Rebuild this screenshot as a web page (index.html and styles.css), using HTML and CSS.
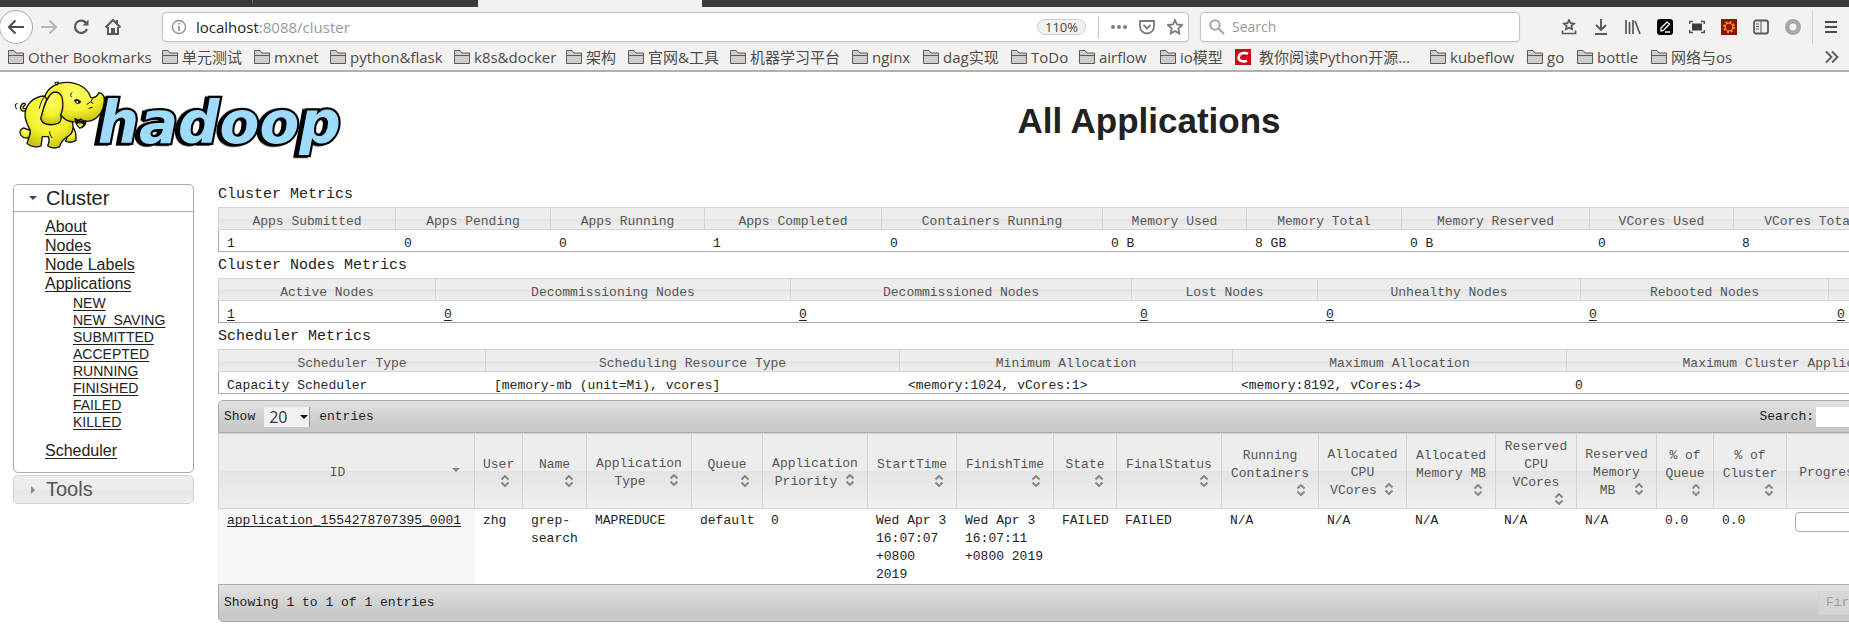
FILE: index.html
```
<!DOCTYPE html>
<html lang="en">
<head>
<meta charset="utf-8">
<title>All Applications</title>
<link rel="stylesheet" href="styles.css">
</head>
<body>
<svg class="defs" aria-hidden="true">
  <symbol id="folder" viewBox="0 0 16 16"><path d="M.5 14.500V1.500h5.500l2 2.500h7.500v10.500zM.5 6.500h15" fill="#d0cecc" stroke="#5c5b59"/></symbol>
  <symbol id="sort" viewBox="0 0 10 12"><path d="M1.500 4.500L5 1l3.500 3.500M1.500 7.500L5 11l3.500-3.500" fill="none" stroke="#888" stroke-width="2"/></symbol>
</svg>

<header class="browser">
  <div class="tabs"><span class="tab-behind"></span><span class="tab-active"></span></div>
  <div class="toolbar">
    <button class="back" aria-label="Back"><svg width="18" height="18" viewBox="0 0 18 18"><path d="M17 9H2M8.500 2.500L2 9l6.500 6.500" fill="none" stroke="#4c4b49" stroke-width="2"/></svg></button>
    <button class="tool" aria-label="Forward"><svg width="18" height="18" viewBox="0 0 18 18"><path d="M1 9h15M9.500 2.500L16 9l-6.500 6.500" fill="none" stroke="#bab8b5" stroke-width="2"/></svg></button>
    <button class="tool" aria-label="Reload"><svg width="18" height="18" viewBox="0 0 18 18"><path d="M14.500 5.500A6.200 6.200 0 1 0 15 11" fill="none" stroke="#5a5957" stroke-width="2.200"/><path d="M16.500 1.500v6h-6z" fill="#5a5957"/></svg></button>
    <button class="tool" aria-label="Home"><svg width="18" height="18" viewBox="0 0 18 18"><path d="M1.500 9.500L9 2l7.500 7.500" fill="none" stroke="#5a5957" stroke-width="2"/><path d="M4 9v7h10V9" fill="none" stroke="#5a5957" stroke-width="2"/><path d="M7 16v-6h4v6zM12 2h2v5h-2z" fill="#5a5957"/></svg></button>
    <div class="urlbar">
      <svg width="16" height="16" viewBox="0 0 16 16"><circle cx="8" cy="8" r="6.500" fill="none" stroke="#8a8a8a" stroke-width="1.300"/><path d="M8 7v5M8 4v1.600" stroke="#8a8a8a" stroke-width="1.600"/></svg>
      <span class="url">localhost<span class="dim">:8088/cluster</span></span>
      <button class="zoom-level">110%</button>
      <span class="bar-divider"></span>
      <svg width="16" height="16" viewBox="0 0 16 16"><g fill="#7c7c7c"><circle cx="2" cy="8" r="2"/><circle cx="8" cy="8" r="2"/><circle cx="14" cy="8" r="2"/></g></svg>
      <svg width="16" height="16" viewBox="0 0 16 16"><path d="M1 2h14v5.500a7 7 0 0 1-14 0z" fill="none" stroke="#7c7c7c" stroke-width="1.800"/><path d="M4.500 6L8 9.500 11.500 6" fill="none" stroke="#7c7c7c" stroke-width="1.800"/></svg>
      <svg width="16" height="16" viewBox="0 0 16 16"><path d="M8 1l2 4.500 5 .6-3.700 3.400 1 5L8 12l-4.300 2.500 1-5L1 6.100l5-.6z" fill="none" stroke="#7c7c7c" stroke-width="1.800"/></svg>
    </div>
    <label class="searchbar">
      <svg width="16" height="16" viewBox="0 0 16 16"><circle cx="6" cy="6" r="4.700" fill="none" stroke="#a5a5a5" stroke-width="2"/><path d="M9.500 9.500L15 15" stroke="#a5a5a5" stroke-width="2"/></svg>
      <input type="search" placeholder="Search" aria-label="Search the web">
    </label>
    <div class="extensions">
      <button aria-label="Saved pages"><svg width="16" height="16" viewBox="0 0 16 16"><path d="M8 1l1.500 3.200 3.500.4-2.600 2.300.7 3.400L8 8.700l-3.100 1.600.7-3.400L3 4.600l3.500-.4zM1.500 11.500v3h13v-3" fill="none" stroke="#5a5957" stroke-width="1.700"/></svg></button>
      <button aria-label="Downloads"><svg width="16" height="16" viewBox="0 0 16 16"><path d="M8 0v11M3 6l5 5 5-5M2 15h12" fill="none" stroke="#5a5957" stroke-width="1.900"/></svg></button>
      <button aria-label="Library"><svg width="16" height="16" viewBox="0 0 16 16"><path d="M1 1v14M4.500 3v12M8 1v14M10 2l5 13" fill="none" stroke="#5a5957" stroke-width="1.700"/></svg></button>
      <button aria-label="Notes"><svg width="16" height="16" viewBox="0 0 16 16"><rect width="16" height="16" rx="3" fill="#000"/><path d="M4 9l6-6 2.500 2-6 6.500L4 12zM8 13h5" fill="none" stroke="#fff" stroke-width="1.300"/></svg></button>
      <button aria-label="Screenshot"><svg width="16" height="16" viewBox="0 0 16 16"><rect x="3" y="4.500" width="10" height="7" fill="#3c3c3c"/><path d="M.7 5V2.500H4M12 2.500h3.300V5M15.300 11v2.500H12M4 13.500H.7V11" fill="none" stroke="#555" stroke-width="1.400"/></svg></button>
      <button aria-label="Settings sync"><svg width="16" height="16" viewBox="0 0 16 16"><rect width="16" height="16" fill="#8e1206"/><circle cx="8" cy="8" r="5" fill="none" stroke="#e59a10" stroke-width="2" stroke-dasharray="2 1.900"/><circle cx="8" cy="8" r="3.800" fill="none" stroke="#e59a10" stroke-width="1.200"/></svg></button>
      <button aria-label="Sidebar"><svg width="16" height="16" viewBox="0 0 16 16"><rect x="1" y="1.500" width="14" height="13" rx="2" fill="none" stroke="#5a5957" stroke-width="1.800"/><path d="M8 2v12M3 5h3M3 7.500h3M3 10h3" stroke="#5a5957"/></svg></button>
      <button aria-label="Proxy"><svg width="16" height="16" viewBox="0 0 16 16"><circle cx="8" cy="8" r="5.700" fill="none" stroke="#aaa8a6" stroke-width="4.600"/></svg></button>
    </div>
    <button class="menu" aria-label="Menu"><svg width="12" height="14" viewBox="0 0 12 14"><path d="M0 2h12M0 7h12M0 12h12" stroke="#4c4b49" stroke-width="2"/></svg></button>
  </div>
  <nav class="bookmarks" aria-label="Bookmarks">
    <a href="#"><svg><use href="#folder"/></svg>Other Bookmarks</a>
    <a href="#"><svg><use href="#folder"/></svg>单元测试</a>
    <a href="#"><svg><use href="#folder"/></svg>mxnet</a>
    <a href="#"><svg><use href="#folder"/></svg>python&amp;flask</a>
    <a href="#"><svg><use href="#folder"/></svg>k8s&amp;docker</a>
    <a href="#"><svg><use href="#folder"/></svg>架构</a>
    <a href="#"><svg><use href="#folder"/></svg>官网&amp;工具</a>
    <a href="#"><svg><use href="#folder"/></svg>机器学习平台</a>
    <a href="#"><svg><use href="#folder"/></svg>nginx</a>
    <a href="#"><svg><use href="#folder"/></svg>dag实现</a>
    <a href="#"><svg><use href="#folder"/></svg>ToDo</a>
    <a href="#"><svg><use href="#folder"/></svg>airflow</a>
    <a href="#"><svg><use href="#folder"/></svg>io模型</a>
    <a href="#" class="site"><svg viewBox="0 0 16 16"><rect width="16" height="16" fill="#ca0c16"/><path d="M13 4.800C10 3.500 4 3.600 3.600 8.500c-.2 3.800 5 4.600 8.400 3.200" fill="none" stroke="#fff" stroke-width="2.600"/></svg>教你阅读Python开源…</a>
    <a href="#"><svg><use href="#folder"/></svg>kubeflow</a>
    <a href="#"><svg><use href="#folder"/></svg>go</a>
    <a href="#"><svg><use href="#folder"/></svg>bottle</a>
    <a href="#"><svg><use href="#folder"/></svg>网络与os</a>
    <button class="more" aria-label="More bookmarks"><svg viewBox="0 0 16 16"><path d="M1 2.500L6.500 8 1 13.500M7 2.500L12.500 8 7 13.500" fill="none" stroke="#5a5957" stroke-width="1.800"/></svg></button>
  </nav>
</header>

<div class="page">
  <a href="#" class="logo" aria-label="Hadoop">
    <svg width="331" height="80" viewBox="36 30 993 240">
      <defs>
        <radialGradient id="skin" cx=".5" cy=".3" r=".7"><stop offset="0" stop-color="#ffff6e"/><stop offset=".6" stop-color="#f4f22e"/><stop offset="1" stop-color="#c9c410"/></radialGradient>
      </defs>
      <text class="wordmark" x="290" y="219">hadoop</text>
      <g transform="translate(-4 -2)" fill="url(#skin)" stroke="#111" stroke-width="4" stroke-linejoin="round" stroke-linecap="round">
        <path d="M77 125c-12 2-18-6-13-16 3-8 13-10 13-4 0 5-7 4-7 9 1 5 6 5 11 2" />
        <path d="M198 190c6 12 4 20-1 25 10 6 22 4 32-2 1-14-3-32-10-42z"/>
        <path d="M72 176c-12 4-14 14-8 22 6 7 16 10 24 6l6-20z"/>
        <path d="M133 80c-34 2-57 30-57 56 0 20 10 34 16 48 2 16-8 26-10 38 10 11 30 13 42 8l4-28h18c5 12 2 18-2 27 11 8 24 9 36 3 3-13 12-24 28-33 12-8 14-22 11-38l-30-70z"/>
        <path d="M135 82c9-26 36-44 68-43 33 1 61 17 70 45 12 4 20-4 25-14 10 2 17 10 16 25-2 26-15 49-37 58-13 5-26 3-34-4l-12 8c-18 2-33-4-42-14z"/>
        <path d="M226 148c1 10 5 20 14 28 10-1 18-9 19-21-13 3-22 0-33-7z" fill="#111"/>
        <path d="M232 165c5-4 13-4 19 0-3 6-6 9-11 9z" fill="#e9e231" stroke="none"/>
        <path d="M158 70c14-6 27 2 30 18 3 18 1 37-5 49 3 11 1 21-8 25-16 6-35 4-46-3l-6-11c7-24 13-61 35-78z"/>
        <path d="M119 117c4-16 8-27 16-35M157 205c-6-6-7-13-7-18M215 82c-4-6-2-10 2-12M262 105l10-7 8 4M268 117l10-3M278 88l-3 8M172 48l4-9M168 45l-3-5 11-2M50 119l-4-13 7-4" fill="none" stroke-width="3"/>
        <path d="M224 93c5-5 12-4 16 2l4 1-3 5-9 2z" fill="#111" stroke-width="2"/><circle cx="233" cy="98" r="3" fill="#fff" stroke="none"/>
      </g>
    </svg>
  </a>
  <h1>All Applications</h1>

  <aside class="sidebar">
    <section class="panel">
      <h3><button class="panel-head"><span class="caret down"></span>Cluster</button></h3>
      <ul>
        <li><a href="#">About</a></li>
        <li><a href="#">Nodes</a></li>
        <li><a href="#">Node Labels</a></li>
        <li><a href="#">Applications</a>
          <ul>
            <li><a href="#">NEW</a></li>
            <li><a href="#">NEW_SAVING</a></li>
            <li><a href="#">SUBMITTED</a></li>
            <li><a href="#">ACCEPTED</a></li>
            <li><a href="#">RUNNING</a></li>
            <li><a href="#">FINISHED</a></li>
            <li><a href="#">FAILED</a></li>
            <li><a href="#">KILLED</a></li>
          </ul>
        </li>
        <li><a href="#">Scheduler</a></li>
      </ul>
    </section>
    <section class="panel closed">
      <h3><button class="panel-head"><span class="caret right"></span>Tools</button></h3>
    </section>
  </aside>

  <main>
    <table class="metrics">
      <caption>Cluster Metrics</caption>
      <colgroup><col style="width:178px"><col style="width:155px"><col style="width:154px"><col style="width:177px"><col style="width:221px"><col style="width:144px"><col style="width:155px"><col style="width:188px"><col style="width:144px"><col style="width:155px"><col></colgroup>
      <thead><tr><th>Apps Submitted</th><th>Apps Pending</th><th>Apps Running</th><th>Apps Completed</th><th>Containers Running</th><th>Memory Used</th><th>Memory Total</th><th>Memory Reserved</th><th>VCores Used</th><th>VCores Total</th><th></th></tr></thead>
      <tbody><tr><td>1</td><td>0</td><td>0</td><td>1</td><td>0</td><td>0 B</td><td>8 GB</td><td>0 B</td><td>0</td><td>8</td><td></td></tr></tbody>
    </table>
    <table class="metrics">
      <caption>Cluster Nodes Metrics</caption>
      <colgroup><col style="width:218px"><col style="width:355px"><col style="width:341px"><col style="width:186px"><col style="width:263px"><col style="width:248px"><col></colgroup>
      <thead><tr><th>Active Nodes</th><th>Decommissioning Nodes</th><th>Decommissioned Nodes</th><th>Lost Nodes</th><th>Unhealthy Nodes</th><th>Rebooted Nodes</th><th></th></tr></thead>
      <tbody><tr><td><a href="#">1</a></td><td><a href="#">0</a></td><td><a href="#">0</a></td><td><a href="#">0</a></td><td><a href="#">0</a></td><td><a href="#">0</a></td><td><a href="#">0</a></td></tr></tbody>
    </table>
    <table class="metrics">
      <caption>Scheduler Metrics</caption>
      <colgroup><col style="width:268px"><col style="width:414px"><col style="width:333px"><col style="width:334px"><col></colgroup>
      <thead><tr><th>Scheduler Type</th><th>Scheduling Resource Type</th><th>Minimum Allocation</th><th>Maximum Allocation</th><th>Maximum Cluster Application Priority</th></tr></thead>
      <tbody><tr><td>Capacity Scheduler</td><td>[memory-mb (unit=Mi), vcores]</td><td>&lt;memory:1024, vCores:1&gt;</td><td>&lt;memory:8192, vCores:4&gt;</td><td>0</td></tr></tbody>
    </table>

    <div class="strip top">
      <label class="length">Show <span class="select"><select><option>20</option><option>40</option><option>60</option></select></span> entries</label>
      <label class="filter">Search:<input type="text"></label>
    </div>
    <table class="apps">
      <colgroup><col style="width:257px"><col style="width:48px"><col style="width:64px"><col style="width:105px"><col style="width:71px"><col style="width:105px"><col style="width:89px"><col style="width:97px"><col style="width:63px"><col style="width:105px"><col style="width:97px"><col style="width:88px"><col style="width:89px"><col style="width:81px"><col style="width:80px"><col style="width:57px"><col style="width:73px"><col style="width:106px"><col></colgroup>
      <thead><tr>
        <th><div>ID<span class="sorted"></span></div></th>
        <th><div>User<svg><use href="#sort"/></svg></div></th>
        <th><div>Name<svg><use href="#sort"/></svg></div></th>
        <th><div>Application<br>Type<svg><use href="#sort"/></svg></div></th>
        <th><div>Queue<svg><use href="#sort"/></svg></div></th>
        <th><div>Application<br>Priority<svg><use href="#sort"/></svg></div></th>
        <th><div>StartTime<svg><use href="#sort"/></svg></div></th>
        <th><div>FinishTime<svg><use href="#sort"/></svg></div></th>
        <th><div>State<svg><use href="#sort"/></svg></div></th>
        <th><div>FinalStatus<svg><use href="#sort"/></svg></div></th>
        <th><div>Running<br>Containers<svg><use href="#sort"/></svg></div></th>
        <th><div>Allocated<br>CPU<br>VCores<svg><use href="#sort"/></svg></div></th>
        <th><div>Allocated<br>Memory MB<svg><use href="#sort"/></svg></div></th>
        <th><div>Reserved<br>CPU<br>VCores<svg><use href="#sort"/></svg></div></th>
        <th><div>Reserved<br>Memory<br>MB<svg><use href="#sort"/></svg></div></th>
        <th><div>% of<br>Queue<svg><use href="#sort"/></svg></div></th>
        <th><div>% of<br>Cluster<svg><use href="#sort"/></svg></div></th>
        <th><div>Progress<svg><use href="#sort"/></svg></div></th>
        <th></th>
      </tr></thead>
      <tbody><tr>
        <td class="key"><a href="#">application_1554278707395_0001</a></td>
        <td>zhg</td><td>grep-search</td><td>MAPREDUCE</td><td>default</td><td>0</td>
        <td>Wed Apr 3 16:07:07 +0800 2019</td><td>Wed Apr 3 16:07:11 +0800 2019</td>
        <td>FAILED</td><td>FAILED</td><td>N/A</td><td>N/A</td><td>N/A</td><td>N/A</td><td>N/A</td><td>0.0</td><td>0.0</td>
        <td><div class="progress" role="progressbar" aria-label="Progress"></div></td><td></td>
      </tr></tbody>
    </table>
    <div class="strip bottom">
      <span>Showing 1 to 1 of 1 entries</span>
      <div class="pager"><button disabled>First</button></div>
    </div>
  </main>
</div>
</body>
</html>
```
FILE: styles.css
```
* { box-sizing: border-box; }
html { overflow: hidden auto; }
body {
  margin: 0;
  overflow-x: hidden;
  background: #fff;
  color: #222;
  font: 13px/18px "Liberation Mono", monospace;
}
button { margin: 0; padding: 0; border: 0; background: none; font: inherit; color: inherit; }
svg { display: block; flex: none; }
.defs { position: absolute; width: 0; height: 0; }

/* browser chrome */
.browser {
  font: 15px/20px "Open Sans", "Noto Sans CJK SC", sans-serif;
  background: #f4f2f1;
  border-bottom: 2px solid #b5b0ab;
  color: #4c4b49;
}
.tabs { display: flex; height: 7px; background: #3c3b37; }
.tab-behind { width: 253px; height: 3px; border-right: 1px solid #6b6a66; }
.tab-active { width: 224px; margin-left: 225px; background: #f4f2f1; }
.toolbar { display: flex; align-items: center; height: 39px; }
.back {
  display: grid; place-items: center;
  width: 34px; height: 34px; margin-left: -1px;
  border: 1px solid #a9a6a3; border-radius: 50%; background: #fff;
}
.tool { display: grid; place-items: center; width: 32px; height: 32px; }
.urlbar, .searchbar {
  display: flex; align-items: center;
  height: 30px;
  border: 1px solid #c6c2be; border-radius: 4px;
  background: #fff;
  box-shadow: 0 1px 3px #0000000f;
}
.urlbar { flex: 1; margin-left: 33px; padding: 0 5px 0 8px; gap: 12px; }
.url { flex: 1; margin-left: -3px; font-size: 15px; color: #222; }
.dim { color: #999; }
.zoom-level {
  width: 49px; height: 16px;
  border: 1px solid #ccc; border-radius: 8px;
  background: #f2f2f2; color: #444;
  font-size: 13px; line-height: 14px;
}
.bar-divider { width: 1px; height: 22px; background: #c4c4c4; }
.searchbar { width: 320px; margin-left: 11px; padding: 0 8px; gap: 7px; }
.searchbar input { flex: 1; min-width: 0; padding: 0; border: 0; outline: 0; background: none; font: inherit; font-size: 14px; }
.searchbar input::placeholder { color: #999; opacity: 1; }
.extensions { display: flex; gap: 16px; margin-left: 41px; padding-right: 11px; }
.menu { display: grid; place-items: center; width: 37px; height: 34px; border-left: 1px solid #d5d2cf; }
.bookmarks {
  display: grid;
  grid-template-columns: 154px 92px 76px 124px 112px 62px 102px 122px 71px 88px 68px 81px 75px 195px 97px 50px 74px 1fr 16px;
  align-items: center;
  height: 24px;
  padding: 0 8px 2px;
}
.bookmarks a { display: flex; align-items: center; gap: 4px; color: inherit; text-decoration: none; white-space: nowrap; }
.bookmarks .site { gap: 8px; }
.bookmarks svg { width: 16px; height: 16px; }

/* page */
.page {
  display: grid;
  grid-template-columns: 181px 1fr;
  grid-template-rows: 109px auto;
  column-gap: 24px;
  min-width: 2080px;
  padding-left: 13px;
}
.logo { padding-top: 8px; }
.wordmark {
  font: italic bold 174px "DejaVu Sans", sans-serif;
  fill: #9edcff;
  stroke: #000; stroke-width: 13px; stroke-linejoin: miter; stroke-miterlimit: 2;
  paint-order: stroke;
  filter: drop-shadow(-9px 2px 0 #000);
}
h1 { margin: 0; padding-top: 28px; font: bold 35px/42px "Liberation Sans", Arial, sans-serif; text-align: center; }
a { color: inherit; text-decoration-skip-ink: none; }

.sidebar { margin-top: 3px; font: 16px/19px "Liberation Sans", Arial, sans-serif; }
.panel { border: 1px solid #aaa; border-radius: 5px; background: #fff; }
.panel h3 { margin: 0; font: inherit; }
.panel-head { display: flex; align-items: center; width: 100%; height: 27px; border-bottom: 1px solid #aaa; font-size: 20px; }
.closed { margin-top: 2px; border-color: #d3d3d3; background: linear-gradient(#ededed 50%, #e4e4e4 50%, #efefef); color: #555; }
.closed .panel-head { border: 0; }
.caret { width: 8px; margin: 0 9px 0 15px; }
.caret::before { content: ""; display: block; width: 0; border: 4px solid transparent; }
.down::before { border-top-color: #444; border-bottom: 0; }
.right::before { border-left-color: #888; border-right: 0; margin-left: 2px; }
.panel ul { margin: 0; padding: 5px 0 12px 31px; list-style: none; }
.panel ul ul { padding: 2px 0 10px 28px; font-size: 14px; line-height: 17px; }
.panel li a { text-underline-offset: 2px; }

table { width: 100%; table-layout: fixed; border-collapse: separate; border-spacing: 0; }
th {
  border: 1px solid #d3d3d3; border-left: 0;
  background: linear-gradient(#ededed 50%, #e4e4e4 50%, #efefef);
  color: #555; font-weight: normal; text-align: center; white-space: nowrap;
}
th:first-child { border-left: 1px solid #d3d3d3; }
td { padding: 3px 8px 0; vertical-align: top; }
td a { text-underline-offset: 2px; }
caption { height: 26px; padding-top: 2px; font-size: 15px; line-height: 24px; text-align: left; }
.metrics th, .metrics td { padding: 7px 8px 0; line-height: 14px; }
.metrics td { border-bottom: 1px solid #aaa; }
.metrics td:first-child { border-left: 1px solid #aaa; }

.strip {
  display: flex; align-items: center; justify-content: space-between;
  padding: 0 5px;
  border: 1px solid #aaa;
  background: linear-gradient(#e2e2e2, #c9c9c9 80%);
}
.top { height: 33px; margin-top: 6px; border-radius: 5px 5px 0 0; }
.bottom { height: 38px; border-radius: 0 0 5px 5px; }
.length { display: flex; align-items: center; gap: 9px; }
.select { position: relative; }
.select::after {
  content: ""; position: absolute; right: 2px; top: 8px;
  border: 4px solid transparent; border-top-color: #111; border-bottom: 0;
  pointer-events: none;
}
select {
  display: block; appearance: none;
  width: 46px; height: 20px; padding: 0 0 0 5px;
  border: 0; border-right: 1px solid #999; border-radius: 0;
  background: #f2f1f0; color: #333;
  font: 16px/20px "Open Sans", sans-serif;
}
.filter { display: flex; align-items: center; gap: 2px; }
.filter input { width: 258px; height: 20px; border: 0; background: #fff; }

.apps th { height: 76px; padding: 4px 8px 0; }
.apps th div { display: flow-root; }
.apps th svg, .sorted { float: right; width: 18px; height: 16px; padding: 1px 4px 3px; }
.sorted::before { content: ""; display: block; border: 4px solid transparent; border-top-color: #888; border-bottom: 0; width: 0; margin-top: 3px; }
.apps td { height: 75px; }
.apps .key { padding-left: 9px; background: #f7f7f7; }
.progress { height: 20px; border: 1px solid #aaa; border-radius: 4px; }
.pager { width: 256px; }
.pager button { padding: 2px 7px; border: 1px solid #d3d3d3; background: #d8d8d8; color: #888; opacity: .7; }
```
